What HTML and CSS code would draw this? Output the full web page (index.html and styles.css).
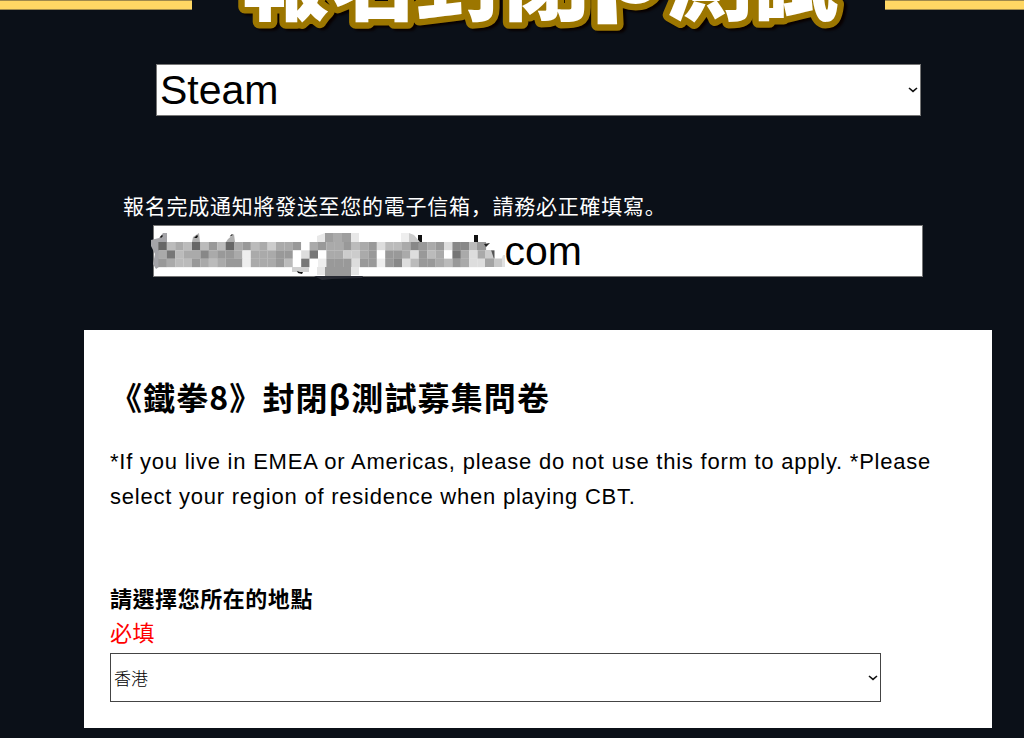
FILE: index.html
```html
<!DOCTYPE html>
<html lang="zh-Hant">
<head>
<meta charset="utf-8">
<title>報名封閉β測試</title>
<link rel="stylesheet" href="styles.css">
</head>
<body>
<header class="banner">
  <span class="rule rule-left"></span>
  <h1 class="banner-title">
    <svg class="banner-art" viewBox="0 0 693 64">
      <text class="banner-text" x="50 137 224 311 398 474 560" y="14">報名封閉<tspan class="banner-beta" dy="-12">β</tspan><tspan dy="12">測試</tspan></text>
    </svg>
  </h1>
  <span class="rule rule-right"></span>
</header>
<main class="page">
  <form class="entry">
    <div class="platform select-box">
      <select class="control" aria-label="平台"><option>Steam</option></select>
      <svg class="chevron" viewBox="0 0 10 6" aria-hidden="true"><path d="M1 1l4 3.4L9 1"/></svg>
    </div>
    <label class="notice" for="email" lang="zh-Hans">報名完成通知將發送至您的電子信箱，請務必正確填寫。</label>
    <div class="email">
      <input class="control email-input" id="email" type="text" value=".com">
      <svg class="mosaic" id="mosaic" viewBox="0 0 360 56" aria-hidden="true"></svg>
    </div>
    <section class="survey">
      <h2 class="survey-title">《鐵拳8》封閉β測試募集問卷</h2>
      <p class="survey-text">*If you live in EMEA or Americas, please do not use this form to apply. *Please select your region of residence when playing CBT.</p>
      <label class="question" for="region">請選擇您所在的地點</label>
      <span class="required">必填</span>
      <div class="region select-box">
        <select class="region-control" id="region"><option>香港</option></select>
        <svg class="chevron" viewBox="0 0 10 6" aria-hidden="true"><path d="M1 1l4 3.4L9 1"/></svg>
      </div>
    </section>
  </form>
</main>
<script src="mosaic.js"></script>
</body>
</html>
```
FILE: styles.css
```css
* { box-sizing: border-box; }
body {
  margin: 0;
  background: #0b1018;
  color: #000;
  font-family: "Liberation Sans", "Noto Sans CJK TC", sans-serif;
}
.banner {
  display: flex;
  align-items: flex-start;
  height: 64px;
  overflow: hidden;
}
.rule {
  height: 10px;
  background: #ffd764;
  border: 1px solid #a08a4c;
  border-width: 1px 0;
}
.rule-left { flex: 192; }
.rule-right { flex: 139; }
.banner-title {
  flex: 693;
  margin: 0;
}
.banner-art {
  display: block;
  width: 100%;
  height: 64px;
}
.banner-text {
  font: 900 87px "Noto Sans CJK TC", sans-serif;
  fill: #fff;
  stroke: #9c7600;
  stroke-width: 13px;
  stroke-linejoin: round;
  paint-order: stroke fill;
  filter: drop-shadow(3px 2px 1px #080000);
}
.banner-beta { font-size: 108px; }
.select-box { position: relative; }
.control {
  display: block;
  width: 100%;
  height: 52px;
  margin: 0;
  padding: 0 3px;
  border: 1px solid #767676;
  border-radius: 0;
  background: #fff;
  color: #000;
  font: 41px/48px "Liberation Sans", sans-serif;
  appearance: none;
}
.chevron {
  position: absolute;
  right: 3px;
  top: 50%;
  width: 10px;
  height: 6px;
  margin-top: -3px;
  fill: none;
  stroke: #111;
  stroke-width: 1.6;
  pointer-events: none;
}
.platform { margin: 0 103px 0 156px; }
.notice {
  display: block;
  margin: 73px 0 0 123px;
  font-size: 21px;
  line-height: 32px;
  letter-spacing: 0.035em;
  color: #fff;
  font-family: "Noto Sans CJK SC", sans-serif;
}
.email {
  position: relative;
  margin: 4px 101px 0 153px;
}
.email-input { padding-left: 339px; }
.mosaic {
  position: absolute;
  left: -3px;
  top: -1px;
  width: 360px;
  height: 56px;
}
.survey {
  margin: 53px 32px 10px 84px;
  padding: 44px 26px 26px;
  background: #fff;
}
.survey-title {
  margin: 0;
  font: 700 32px/44px "Noto Sans CJK TC", sans-serif;
  letter-spacing: 0.035em;
}
.survey-text {
  margin: 26px 0 66px;
  font-size: 22px;
  line-height: 35px;
  letter-spacing: 0.035em;
}
.question, .required {
  display: block;
  font: 700 22px/34px "Noto Sans CJK TC", sans-serif;
  letter-spacing: 0.025em;
}
.required { font-weight: 400; color: #f00; }
.region { margin: 5px 85px 0 0; }
.region-control {
  display: block;
  width: 100%;
  height: 49px;
  margin: 0;
  padding: 0 3px;
  border: 1px solid #444;
  border-radius: 0;
  background: #fff;
  color: #000;
  font: 300 17px/24px "Noto Sans CJK TC", sans-serif;
  appearance: none;
}
```
FILE: mosaic.js
```js
// Pixelated cover over the private part of the address.
const svg = document.getElementById('mosaic');
const add = (tag, attrs) => {
  const el = document.createElementNS('http://www.w3.org/2000/svg', tag);
  for (const name in attrs) el.setAttribute(name, attrs[name]);
  svg.appendChild(el);
};
const path = (d, fill) => add('path', { d, fill });
path('M1 16l8-2 4-5 4 0v9h-8v25l-3 2-3-5 2-10-4-8z', '#a4a4a8');
path('M42 18l1-5 6-4 1 9zM76 18l2-3 6-5 1 8z', '#b0b0b0');
path('M10 13l2-2 1 1-2 2zM44 14l3-3 1 1-1 2zM79 13l3-3 1 1z', '#111');
path('M268 11h4v8h-4zM324 11h4v8h-4z', '#111');
path('M164 52h49l-1 2-30 1-10 1z', '#252831');
const cells = [
  '6bab6b9b6a9bacaa9fa9aa9ba9dbba89a9d88b9',
  'a7baa8a99aeaaa99fd7faacca9f99ad9baf7ada5',
  '9abb9aba99eaaa9bf7fe999d99e98db99ab9add'
];
const size = 25 / 3;
cells.forEach((row, y) => {
  [...row].forEach((c, x) => {
    add('rect', {
      x: 8.4 + x * 8.4, y: 18 + y * size,
      width: 8.5, height: 8.5, fill: '#' + c + c + c
    });
  });
});
path('M167 12l8-3v9h-8zM201 9h8v9h-8z', '#e8e8e8');
path('M175 9h26v9h-26z', '#9e9e9e');
path('M183 9h9v9h-9z', '#aaa');
path('M167 43h8v8h-8zM201 43h8v8h-8z', '#e6e6e6');
path('M175 43h26v9h-26z', '#999');
path('M142 43h17v5h-17z', '#d0d0d0');
path('M147 47l3 1h3l-1 2-4-1z', '#111');
path('M251 9h8v9h-8z', '#eee');
path('M259 9l5 2 6 7h-11z', '#ccc');
path('M327 18l6 3 3 5h-9z', '#999');
path('M335 26h6l3 9h-9z', '#ccc');
path('M334 20l6-1-4 4z', '#222');
path('M335 34.500h9v8.500h-9z', '#a4a4a4');
path('M344 34.500h9v8.500h-9z', '#c8c8c8');
path('M353 31h2v12h-3v-9z', '#e0e0e0');
```
